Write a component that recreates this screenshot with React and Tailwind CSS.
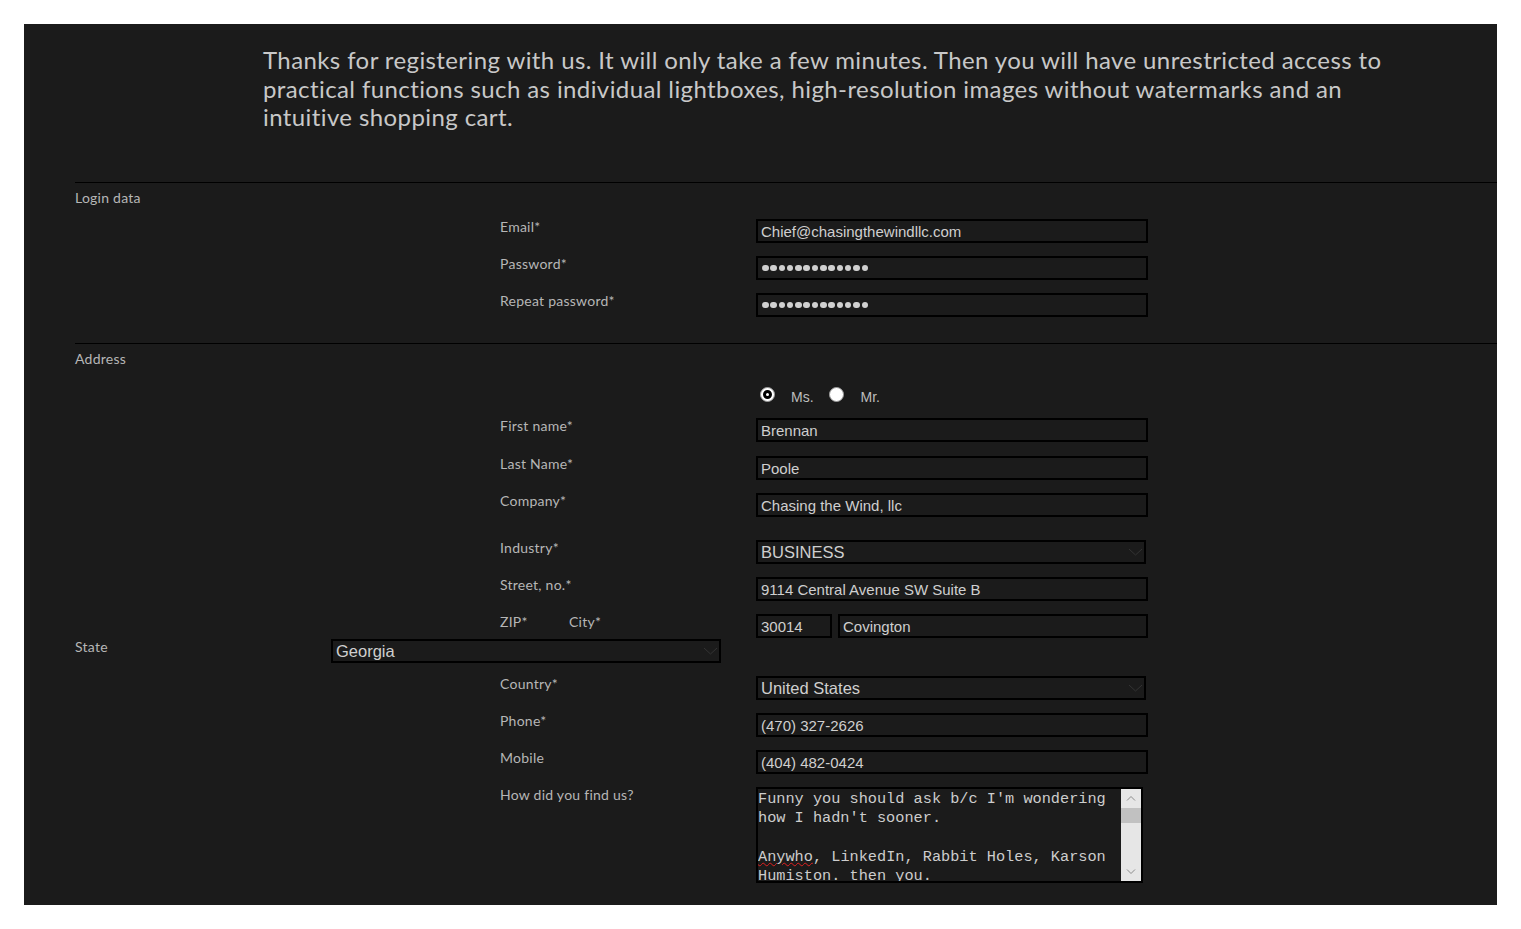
const LABEL = "font-['Lato',sans-serif] text-[14px] leading-[16px] tracking-[0.25px] text-[#b6b6b6]";
const FIELD_TEXT = "font-['Liberation_Sans',Arial,sans-serif] text-[15px] text-[#cfcfcf]";

function Field({ label, children, className = '' }) {
  return (
    <div className={`flex items-start ml-[425px] ${className}`}>
      <div className={`w-[256px] shrink-0 ${LABEL}`}>{label}</div>
      {children}
    </div>
  );
}

function TextInput({ value, className = 'w-[392px]' }) {
  return (
    <input
      readOnly
      value={value}
      className={`${className} h-[24px] border-2 border-black bg-transparent pl-[3px] outline-none ${FIELD_TEXT}`}
    />
  );
}

function Password({ count = 13 }) {
  return (
    <div className="flex items-center gap-[1.8px] w-[392px] h-[24px] border-2 border-black pl-[4px]">
      {Array.from({ length: count }).map((_, i) => (
        <span key={i} className="w-[6.5px] h-[6.5px] rounded-full bg-[#d0d0d0]" />
      ))}
    </div>
  );
}

function Select({ value, className = '' }) {
  return (
    <div
      className={`flex items-center justify-between w-[390px] h-[24px] border-2 border-black pl-[3px] pr-[1px] font-['Liberation_Sans',Arial,sans-serif] text-[16.5px] text-[#cfcfcf] ${className}`}
    >
      <span>{value}</span>
      <svg width="15" height="8" viewBox="0 0 15 8">
        <path d="M1 1l6.5 6 6.5-6" stroke="#333" strokeWidth="1" fill="none" />
      </svg>
    </div>
  );
}

function Radio({ checked }) {
  return (
    <span className="w-[15px] h-[15px] rounded-full bg-white border border-[#9a9a9a] flex items-center justify-center shrink-0">
      {checked && <span className="w-[9px] h-[9px] rounded-full border-[3px] border-black bg-white" />}
    </span>
  );
}

function SectionTitle({ children }) {
  return <div className={`mt-[7px] ${LABEL}`}>{children}</div>;
}

function CommentBox() {
  const lines = [
    'Funny you should ask b/c I\'m wondering',
    'how I hadn\'t sooner.',
    '',
  ];
  return (
    <div className="flex w-[387px] h-[96px] border-2 border-black">
      <div className="flex-1 overflow-hidden pt-[1px] font-['Liberation_Mono','DejaVu_Sans_Mono',monospace] text-[15.25px] leading-[19.33px] text-[#cdcdcd] whitespace-pre">
        {lines.map((l, i) => (
          <div key={i} className="h-[19.33px]">{l}</div>
        ))}
        <div>
          <span className="underline decoration-wavy decoration-[#e02020] decoration-1 underline-offset-[1px]">Anywho</span>, LinkedIn, Rabbit Holes, Karson
        </div>
        <div>Humiston. then you.</div>
      </div>
      <div className="w-[20px] bg-[#e6e6e6] flex flex-col items-center">
        <svg width="20" height="19" viewBox="0 0 20 19">
          <path d="M6 11.5l4-4 4 4" stroke="#8c8c8c" strokeWidth="1" fill="none" />
        </svg>
        <div className="w-full h-[15px] bg-[#c1c1c1]" />
        <div className="flex-1" />
        <svg width="20" height="19" viewBox="0 0 20 19">
          <path d="M6 7.5l4 4 4-4" stroke="#8c8c8c" strokeWidth="1" fill="none" />
        </svg>
      </div>
    </div>
  );
}

export default function App() {
  return (
    <div className="bg-white p-6 min-h-[929px]">
      <div className="bg-[#1b1b1b] h-[881px] overflow-hidden">
        <div className="h-[158px] pl-[239px] pt-[22px]">
          <p className="font-['Lato',sans-serif] text-[24px] leading-[28.5px] tracking-[0.4px] text-[#c8c8c8]">
            Thanks for registering with us. It will only take a few minutes. Then you will have unrestricted access to
            <br />
            practical functions such as individual lightboxes, high-resolution images without watermarks and an
            <br />
            intuitive shopping cart.
          </p>
        </div>

        <section className="ml-[51px] border-t border-black">
          <SectionTitle>Login data</SectionTitle>
          <Field label="Email*" className="mt-[13px]">
            <TextInput value="Chief@chasingthewindllc.com" />
          </Field>
          <Field label="Password*" className="mt-[13px]">
            <Password />
          </Field>
          <Field label="Repeat password*" className="mt-[13px]">
            <Password />
          </Field>
        </section>

        <section className="ml-[51px] mt-[26px] border-t border-black">
          <SectionTitle>Address</SectionTitle>
          <div className="ml-[685px] mt-[20px] flex items-start">
            <Radio checked />
            <span className="ml-[16px] mt-[3px] font-['Liberation_Sans',Arial,sans-serif] text-[14px] leading-[14px] text-[#bdbdbd]">Ms.</span>
            <span className="ml-[15px]"><Radio /></span>
            <span className="ml-[17px] mt-[3px] font-['Liberation_Sans',Arial,sans-serif] text-[14px] leading-[14px] text-[#bdbdbd]">Mr.</span>
          </div>
          <Field label="First name*" className="mt-[14px]">
            <TextInput value="Brennan" />
          </Field>
          <Field label="Last Name*" className="mt-[14px]">
            <TextInput value="Poole" />
          </Field>
          <Field label="Company*" className="mt-[13px]">
            <TextInput value="Chasing the Wind, llc" />
          </Field>
          <Field label="Industry*" className="mt-[23px]">
            <Select value="BUSINESS" />
          </Field>
          <Field label="Street, no.*" className="mt-[13px]">
            <TextInput value="9114 Central Avenue SW Suite B" />
          </Field>
          <div className="flex items-start ml-[425px] mt-[13px]">
            <div className={`w-[69px] shrink-0 ${LABEL}`}>ZIP*</div>
            <div className={`w-[187px] shrink-0 ${LABEL}`}>City*</div>
            <div className="flex gap-[6px]">
              <TextInput value="30014" className="w-[76px]" />
              <TextInput value="Covington" className="w-[310px]" />
            </div>
          </div>
          <div className="flex items-start mt-[1px]">
            <div className={`w-[256px] shrink-0 ${LABEL}`}>State</div>
            <Select value="Georgia" />
          </div>
          <Field label="Country*" className="mt-[13px]">
            <Select value="United States" />
          </Field>
          <Field label="Phone*" className="mt-[13px]">
            <TextInput value="(470) 327-2626" />
          </Field>
          <Field label="Mobile" className="mt-[13px]">
            <TextInput value="(404) 482-0424" />
          </Field>
          <Field label="How did you find us?" className="mt-[13px]">
            <CommentBox />
          </Field>
        </section>
      </div>
    </div>
  );
}
